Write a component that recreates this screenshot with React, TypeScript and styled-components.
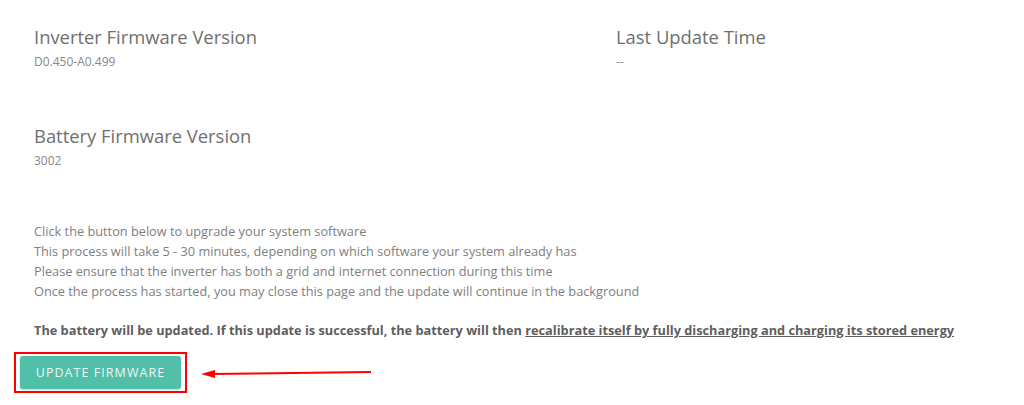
import React from 'react';
import styled, {createGlobalStyle} from 'styled-components';

const GlobalStyle = createGlobalStyle`
  html, body {
    margin: 0;
    padding: 0;
    background: #fff;
  }
  body {
    font-family: 'Open Sans', 'Noto Sans', sans-serif;
    color: #777;
  }
`;

const Page = styled.div`
  padding: 23px 0 0 34px;
  width: 1024px;
  box-sizing: border-box;
`;

const InfoGrid = styled.div`
  display: grid;
  grid-template-columns: 582px 1fr;
  row-gap: 50px;
`;

const InfoItem = styled.div`
  display: flex;
  flex-direction: column;
`;

const InfoTitle = styled.div`
  font-size: 18.4px;
  line-height: 28px;
  color: #6f6f6f;
`;

const InfoValue = styled.div`
  font-size: 12px;
  line-height: 20px;
  margin-top: 1px;
  color: #888;
`;

const Notes = styled.div`
  margin-top: 50px;
  font-size: 12.75px;
  line-height: 20px;
  color: #808080;
`;

const Warning = styled.p`
  margin: 19px 0 0;
  font-size: 12.75px;
  line-height: 20px;
  font-weight: 700;
  color: #5e5e5e;

  span {
    text-decoration: underline;
  }
`;

const ButtonRow = styled.div`
  display: flex;
  align-items: center;
  margin: 12px 0 0 -20px;
`;

const Highlight = styled.div`
  border: 2px solid #f00;
  padding: 2px 4px;
  width: 161px;
`;

const PrimaryButton = styled.button`
  display: block;
  background: #52bfa8;
  border: none;
  border-radius: 3px;
  box-shadow: 0 1px 2px rgba(0, 0, 0, 0.2);
  color: #f0f4f4;
  font-family: 'Open Sans', sans-serif;
  font-size: 12.5px;
  letter-spacing: 1.05px;
  white-space: nowrap;
  padding: 0;
  height: 33px;
  width: 161px;
  cursor: pointer;
`;

const ArrowSvg = styled.svg`
  margin-left: 14px;
  flex: none;
`;

const Arrow = () => (
  <ArrowSvg width="172" height="12" viewBox="0 0 172 12">
    <line x1="10" y1="7" x2="170" y2="5" stroke="#f00" strokeWidth="2" />
    <polygon points="0,7 14,3 14,11" fill="#f00" />
  </ArrowSvg>
);

export default function App() {
  return (
    <>
      <GlobalStyle />
      <Page>
        <InfoGrid>
          <InfoItem>
            <InfoTitle>Inverter Firmware Version</InfoTitle>
            <InfoValue>D0.450-A0.499</InfoValue>
          </InfoItem>
          <InfoItem>
            <InfoTitle>Last Update Time</InfoTitle>
            <InfoValue>--</InfoValue>
          </InfoItem>
          <InfoItem>
            <InfoTitle>Battery Firmware Version</InfoTitle>
            <InfoValue>3002</InfoValue>
          </InfoItem>
        </InfoGrid>
        <Notes>
          <div>Click the button below to upgrade your system software</div>
          <div>
            This process will take 5 - 30 minutes, depending on which software
            your system already has
          </div>
          <div>
            Please ensure that the inverter has both a grid and internet
            connection during this time
          </div>
          <div>
            Once the process has started, you may close this page and the update
            will continue in the background
          </div>
        </Notes>
        <Warning>
          The battery will be updated. If this update is successful, the battery
          will then{' '}
          <span>
            recalibrate itself by fully discharging and charging its stored
            energy
          </span>
        </Warning>
        <ButtonRow>
          <Highlight>
            <PrimaryButton>UPDATE FIRMWARE</PrimaryButton>
          </Highlight>
          <Arrow />
        </ButtonRow>
      </Page>
    </>
  );
}
